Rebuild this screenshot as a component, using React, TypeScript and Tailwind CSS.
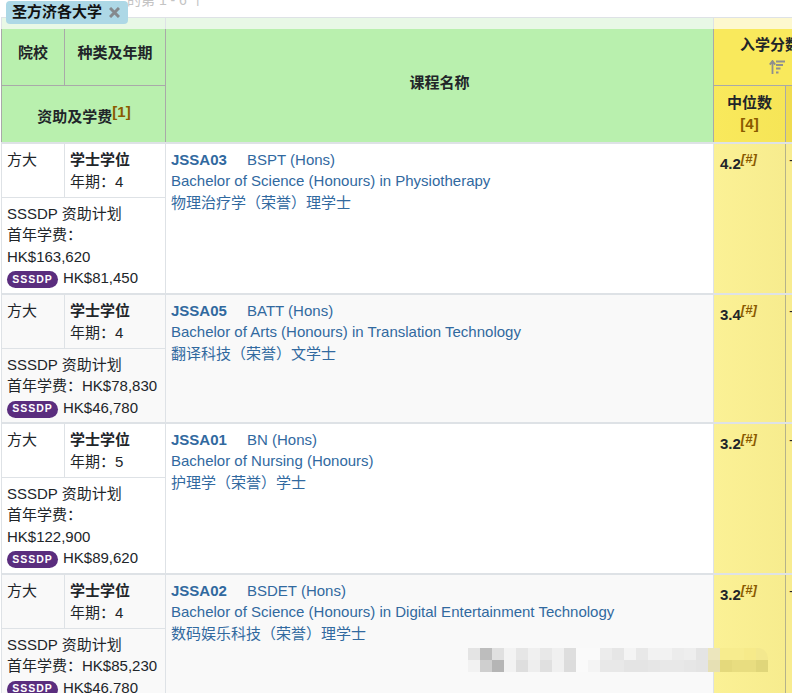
const font = { fontFamily: '"Liberation Sans", "Noto Sans CJK SC", sans-serif' }

interface Programme {
  years: number
  fee: string
  feeWraps: boolean
  net: string
  code: string
  short: string
  en: string
  zh: string
  median: string
  height: string
  rowBg: string
}

const programmes: Programme[] = [
  { years: 4, fee: 'HK$163,620', feeWraps: true, net: 'HK$81,450', code: 'JSSA03', short: 'BSPT (Hons)', en: 'Bachelor of Science (Honours) in Physiotherapy', zh: '物理治疗学（荣誉）理学士', median: '4.2', height: 'h-[149px]', rowBg: 'bg-white' },
  { years: 4, fee: 'HK$78,830', feeWraps: false, net: 'HK$46,780', code: 'JSSA05', short: 'BATT (Hons)', en: 'Bachelor of Arts (Honours) in Translation Technology', zh: '翻译科技（荣誉）文学士', median: '3.4', height: 'h-[127px]', rowBg: 'bg-[#f9f9f9]' },
  { years: 5, fee: 'HK$122,900', feeWraps: true, net: 'HK$89,620', code: 'JSSA01', short: 'BN (Hons)', en: 'Bachelor of Nursing (Honours)', zh: '护理学（荣誉）学士', median: '3.2', height: 'h-[149px]', rowBg: 'bg-white' },
  { years: 4, fee: 'HK$85,230', feeWraps: false, net: 'HK$46,780', code: 'JSSA02', short: 'BSDET (Hons)', en: 'Bachelor of Science (Honours) in Digital Entertainment Technology', zh: '数码娱乐科技（荣誉）理学士', median: '3.2', height: 'h-[127px]', rowBg: 'bg-[#f9f9f9]' },
]

function Row({ p }: { p: Programme }) {
  return (
    <div className={`flex ${p.height} ${p.rowBg} border-b-2 border-[#dee2e6] box-content text-[15px] leading-[21.43px] text-[#212529]`}>
      <div className="w-[165px] shrink-0 flex flex-col border-x border-[#dee2e6]">
        <div className="flex h-[54px] shrink-0 border-b border-[#dee2e6]">
          <div className="w-[63px] pl-[5px] pt-[5px] border-r border-[#dee2e6]">方大</div>
          <div className="pl-[5px] pt-[5px]">
            <div className="font-bold">学士学位</div>
            <div className="mt-[0.5px]">年期：{p.years}</div>
          </div>
        </div>
        <div className="pl-[5px] pt-[5px]">
          <div>SSSDP 资助计划</div>
          <div>首年学费：{p.feeWraps ? <br /> : null}{p.fee}</div>
          <div className="flex items-center gap-[5px]">
            <span className="mt-[3px] inline-flex h-[17px] w-[51px] items-center justify-center rounded-full bg-[#5a2d7e] text-[10.5px] font-bold tracking-[1px] text-white">SSSDP</span>
            <span>{p.net}</span>
          </div>
        </div>
      </div>
      <div className="w-[547px] shrink-0 pl-[5px] pt-[5px] text-[#31699f]">
        <div>
          <span className="inline-block w-[76px] font-bold">{p.code}</span>
          <span>{p.short}</span>
        </div>
        <div>{p.en}</div>
        <div>{p.zh}</div>
      </div>
      <div className="w-[73px] shrink-0 border-x border-[#b5b28a] border-l-[#dee2e6] bg-linear-to-r from-[#fbf195] to-[#f7ec8e] pl-[6px] pt-[9px]">
        <span className="font-bold">{p.median}</span>
        <sup className="top-[-0.5em] text-[13px] italic font-bold text-[#8a5a00]">[#]</sup>
      </div>
      <div className="flex-1 bg-[#f8ec90] pt-[5px] pl-[3px]">-</div>
    </div>
  )
}

function Mosaic() {
  const cells = [
    '#e4e4e4', '#bdbdbd', '#e0e0e0', '#f3f3f3', '#e6e6e6', '#f0f0f0', '#e8e8e8', '#f0f0f0', '#dedede', '#fafafa', '#fafafa', '#ececec', '#e6e6e6', '#f4f4f4', '#e8e8e8', '#f2f2f2', '#f2f2f2', '#ececec', '#eeeeee', '#e4e4e4', '#ece6bd', '#f7ec8e', '#f7ec8e', '#f6ea8a', '#f3e88e',
    '#f2f2f2', '#cfcfcf', '#b5b5b5', '#f2f2f2', '#dedede', '#eeeeee', '#e0e0e0', '#f0f0f0', '#dcdcdc', '#fafafa', '#f4f4f4', '#e8e8e8', '#e8e8e8', '#e4e4e4', '#e4e4e4', '#e6e6e6', '#e8e8e8', '#e8e8e8', '#e6e6e6', '#e4e4e4', '#e6e0b4', '#e4d97c', '#e8dd80', '#e8dd80', '#e0d67a',
  ]
  return (
    <div className="absolute left-[468px] top-[648px] grid w-[300px] grid-cols-[repeat(25,12px)] auto-rows-[12px] overflow-hidden rounded-tr-[10px] pointer-events-none">
      {cells.map((c, i) => (
        <div key={i} style={{ backgroundColor: c }} />
      ))}
    </div>
  )
}

export default function App() {
  return (
    <div className="relative h-[693px] w-[792px] overflow-hidden bg-white" style={font}>
      <div className="h-[17px] overflow-hidden text-[14px] leading-[14px] text-[#c4c4c4]">
        <div className="-mt-[7px] flex whitespace-nowrap">
          <span className="ml-[127px]">的第 1 - 6 个</span>
        </div>
      </div>
      <div className="absolute left-[6px] top-px flex h-[23px] w-[122px] items-center rounded-[4px] bg-[#add8e6] pl-[6px] text-[15px] font-bold text-[#111]">
        圣方济各大学
        <svg className="ml-[7px]" width="11" height="11" viewBox="0 0 11 11" stroke="#85898d" strokeWidth="3" fill="none">
          <path d="M1 1l9 9M10 1l-9 9" />
        </svg>
      </div>

      <div className="ml-px">
        {/* 顶部浅色条 */}
        <div className="flex h-[12px] border-t border-[#dee2e6]">
          <div className="w-[165px] bg-[#e8f8e6] border-x border-[#dee2e6]" />
          <div className="w-[547px] bg-[#e8f8e6]" />
          <div className="flex-1 bg-[#fdf8cf] border-l border-[#dee2e6]" />
        </div>

        {/* 表头 */}
        <div className="flex h-[113px] text-[15px] leading-[21px] font-bold text-[#212529] box-content border-b-2 border-[#dee2e6]">
          <div className="w-[165px] shrink-0 flex flex-col bg-[#b9f0ae] border-x border-[#a9a9a9]">
            <div className="flex h-[57px] border-b border-[#a9a9a9] pb-[10px]">
              <div className="-mb-[10px] flex w-[63px] items-center justify-center border-r border-[#a9a9a9] pb-[10px]">院校</div>
              <div className="flex flex-1 items-center justify-center">种类及年期</div>
            </div>
            <div className="flex flex-1 items-center justify-center pl-px pt-[4px]">
              资助及学费<sup className="top-[-0.3em] text-[15px] text-[#8a5a00]">[1]</sup>
            </div>
          </div>
          <div className="flex w-[547px] shrink-0 items-center justify-center bg-[#b9f0ae] pb-[7px]">课程名称</div>
          <div className="flex-1 flex flex-col bg-[#f9e95c] border-l border-[#a9a9a9]">
            <div className="h-[57px] border-b border-[#a9a9a9] pl-[26px] pt-[5px] whitespace-nowrap">
              入学分数
              <svg className="ml-[29px] mt-[5px] block" width="16" height="14" viewBox="0 0 16 14" fill="none" stroke="#8f8f8f" strokeWidth="1.8">
                <path d="M3.5 14V2M0.8 4.6 3.5 1l2.7 3.6M7 1.5h9M7 5h7M7 8.5h4.5M7 12.5h2.5" />
              </svg>
            </div>
            <div className="flex flex-1">
              <div className="w-[72px] border-r border-[#a9a9a9] pt-[6px] text-center bg-linear-to-r from-[#f9e95c] to-[#f6e557]">
                <div>中位数</div>
                <div className="text-[#8a5a00]">[4]</div>
              </div>
              <div className="flex-1 bg-[#f0dc50]" />
            </div>
          </div>
        </div>

        {programmes.map((p) => (
          <Row key={p.code} p={p} />
        ))}
      </div>
      <Mosaic />
    </div>
  )
}
